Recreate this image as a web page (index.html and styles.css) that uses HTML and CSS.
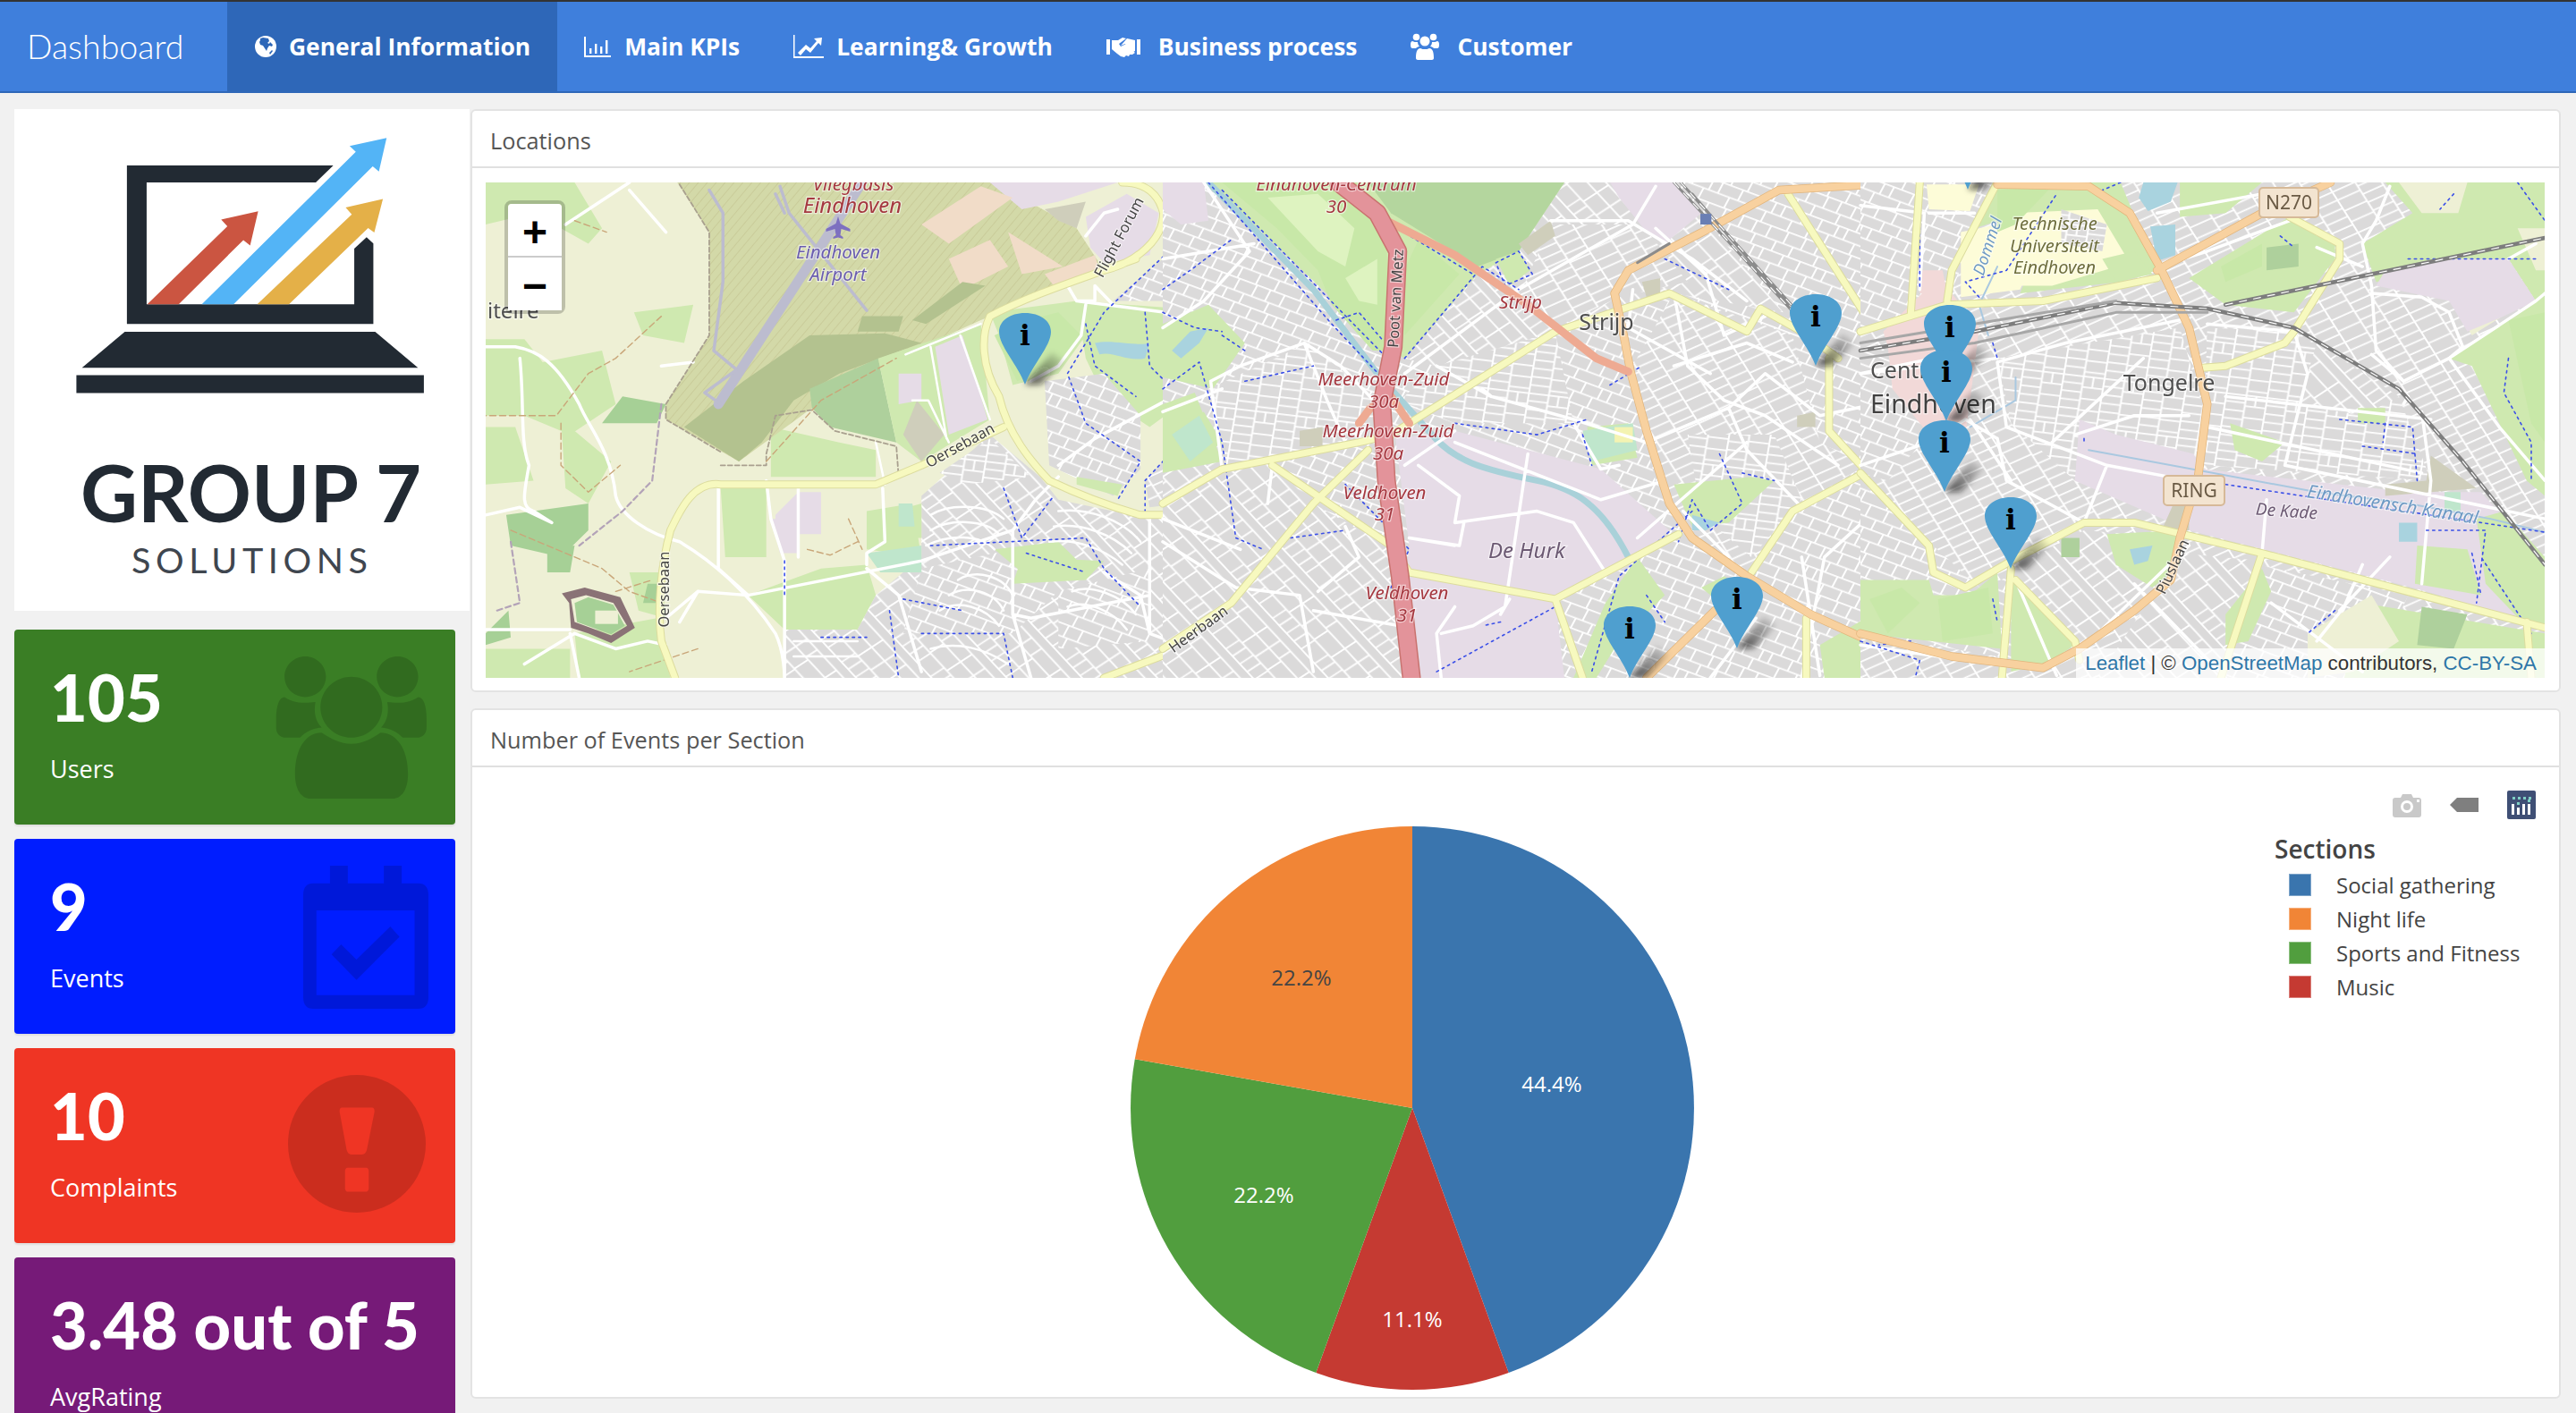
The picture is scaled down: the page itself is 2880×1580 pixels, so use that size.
FILE: index.html
```html
<!DOCTYPE html>
<html lang="en">
<head>
<meta charset="utf-8">
<title>Dashboard</title>
<link rel="stylesheet" href="styles.css">
</head>
<body>
<header class="navbar">
  <div class="brand">Dashboard</div>
  <nav class="tabs">
    <a class="tab active">
      <svg class="ic ic-globe" viewBox="0 0 24 24"><circle cx="12" cy="12" r="12" fill="#fff"/><path class="cut" d="M6 3l3-1 6 1 1 3-2 2 2 1 1-2 3 3-1 2-3-1-2 3-1 3-2-3-2-3-3-1-1-3 1-2zM16 19l3-3 1 1-3 4z"/></svg>
      General Information
    </a>
    <a class="tab">
      <svg class="ic ic-bar" viewBox="0 0 30 23"><path class="solid" d="M0 0h2v21h28v2H0z"/><path class="solid" d="M6 13h2.400v6H6zM12 8h2.400v11H12zM18 11h2.400v8H18zM24 4h2.400v15H24z"/></svg>
      Main KPIs
    </a>
    <a class="tab">
      <svg class="ic ic-line" viewBox="0 0 34 26"><path class="solid" d="M0 0h1.500v24H34v2H0z"/><path class="solid" d="M5 20l9-9 5 4 7-8-3-3 9-1-1 9-3-3-9 11-5-4-6 7z"/></svg>
      Learning&amp; Growth
    </a>
    <a class="tab">
      <svg class="ic ic-hand" viewBox="0 0 38 23"><path class="solid" d="M0 3h4v17H0zM34 3h4v17h-4z"/><path class="solid" d="M6 4l7 0 5-3 4 1-8 6 2 3 6-3 10 10-3 2-3 0-1 2-3-1-2 2-4-1-4-3-6-5z"/><path class="solid" d="M23 2l9 2v12l-2 1-9-9-5 2 7-8z"/></svg>
      Business process
    </a>
    <a class="tab">
      <svg class="ic ic-users" viewBox="0 0 32 30"><circle class="solid" cx="6.500" cy="4.500" r="3.800"/><circle class="solid" cx="25.500" cy="4.500" r="3.800"/><circle class="solid" cx="16" cy="9" r="5.500"/><path class="solid" d="M0 13c0-3 1-4 2-4 2 1 3 1 6 1 0 2 1 4 2 5-2 0-3 1-4 2H2c-1 0-2-1-2-4zM32 13c0-3-1-4-2-4-2 1-3 1-6 1 0 2-1 4-2 5 2 0 3 1 4 2h4c1 0 2-1 2-4zM8 30c-1 0-2-1-2-2 0-6 1-11 5-11 2 1 3 1 5 1s3 0 5-1c4 0 5 5 5 11 0 1-1 2-2 2z"/></svg>
      Customer
    </a>
  </nav>
</header>

<div class="page">
  <aside class="side">
    <div class="logo">
      <svg class="logo-svg" viewBox="0 0 509 561">
        <g transform="translate(-16 -122) translate(0 100) scale(.3444 .3827)">
          <path class="lg-dark" d="M412 222H1082L1025 272H476V628H1150V465L1190 432 1212 450V685H412Z"/>
          <path class="lg-dark" d="M405 708H1218L1357 813H266ZM248 835H1376V887H248Z"/>
          <path class="lg-red" d="M478 628 738 400 718 380 838 356 812 456 790 440 580 628Z"/>
          <path class="lg-blue" d="M655 628 1155 182 1135 165 1255 142 1230 240 1210 225 758 628Z"/>
          <path class="lg-gold" d="M835 628 1142 365 1122 345 1243 320 1215 418 1195 405 938 628Z"/>
        </g>
        <text class="lg-t1" x="74" y="462" textLength="381" lengthAdjust="spacingAndGlyphs">GROUP 7</text>
        <text class="lg-t2" x="131" y="519" textLength="264">SOLUTIONS</text>
      </svg>
    </div>

    <div class="vbox green">
      <div class="vnum">105</div><div class="vlab">Users</div>
      <svg class="vicon v-users" viewBox="893 78 497 280" preserveAspectRatio="none">
        <path d="M992 78c37 0 67 18 67 40s-30 40-67 40-67-18-67-40 30-40 67-40zM1290 78c37 0 67 18 67 40s-30 40-67 40-67-18-67-40 30-40 67-40zM1141 118c55 0 100 27 100 60s-45 60-100 60-100-27-100-60 45-60 100-60z"/>
        <path d="M925 158c20 8 45 14 100 10-6 20 0 38 20 50-30 2-50 8-70 20h-45c-20 0-32-8-32-20v-18c0-25 10-42 27-42zM1357 158c-20 8-45 14-100 10 6 20 0 38-20 50 30 2 50 8 70 20h45c20 0 32-8 32-20v-18c0-25-10-42-27-42z"/>
        <path d="M1045 228c30 12 60 22 96 22s66-10 94-22c50 0 89 30 89 82 0 30-20 48-50 48h-265c-30 0-50-18-50-48 0-52 36-82 86-82z"/>
      </svg>
    </div>
    <div class="vbox blue">
      <div class="vnum">9</div><div class="vlab">Events</div>
      <svg class="vicon v-cal" viewBox="985 490 407 282" preserveAspectRatio="none">
        <path fill-rule="evenodd" d="M1072 490h58v35h117v-35h58v35h55c20 0 32 8 32 22v203c0 14-12 22-32 22h-343c-20 0-32-8-32-22v-203c0-14 12-22 32-22h55zM1028 578v167h319v-167z"/>
        <path d="M1077 665l31-20 50 30 110-65 30 20-140 85z"/>
      </svg>
    </div>
    <div class="vbox red">
      <div class="vnum">10</div><div class="vlab">Complaints</div>
      <svg class="vicon v-exc" viewBox="935 906 447 270" preserveAspectRatio="none">
        <path fill-rule="evenodd" d="M1158 906c123 0 224 60 224 135s-101 135-224 135-223-60-223-135 100-135 223-135zM1110 970c-6 0-9 4-7 10l22 72c2 6 8 10 16 10h34c8 0 14-4 16-10l24-72c2-6-1-10-7-10zM1128 1088c-5 0-8 3-8 7v33c0 4 3 7 8 7h61c5 0 8-3 8-7v-33c0-4-3-7-8-7z"/>
      </svg>
    </div>
    <div class="vbox purple">
      <div class="vnum">3.48 out of 5</div><div class="vlab">AvgRating</div>
    </div>
  </aside>

  <main class="main">
    <section class="card card-map">
      <div class="card-head">Locations</div>
      <div class="card-body map-body">
        <div class="map">
          <svg class="map-svg" viewBox="543 204 2302 554" preserveAspectRatio="none">
            <defs>
              <pattern id="ra" width="150" height="120" patternUnits="userSpaceOnUse" patternTransform="rotate(24)"><rect width="150" height="120" fill="#dbdada"/><path class="st" d="M0 2H150M0 34H150M0 62H150M0 92H150M4 0V34M46 0V34M88 0V34M120 2V34M30 34V62M70 34V62M130 34V62M12 62V92M60 62V92M100 62V92M140 62V92M40 92V120M84 92V120M128 92V120"/></pattern>
              <pattern id="rb" width="130" height="150" patternUnits="userSpaceOnUse" patternTransform="rotate(-38)"><rect width="130" height="150" fill="#dbdada"/><path class="st" d="M2 0V150M40 0V150M78 0V76M110 0V150M0 20H40M0 44H40M0 70H40M0 96H40M0 122H40M40 30H110M40 76H110M78 112H110M78 76V150M40 120H78"/></pattern>
              <pattern id="rc" width="120" height="160" patternUnits="userSpaceOnUse" patternTransform="rotate(62)"><rect width="120" height="160" fill="#dbdada"/><path class="st" d="M0 2H120M0 54H120M0 106H120M6 2V54M30 2V54M54 2V54M78 2V54M102 2V54M18 54V106M42 54V106M66 54V106M90 54V106M114 54V106M6 106V160M38 106V160M70 106V160M102 106V160"/></pattern>
              <pattern id="rd" width="90" height="130" patternUnits="userSpaceOnUse" patternTransform="rotate(8)"><rect width="90" height="130" fill="#dbdada"/><path class="st" d="M2 0V130M46 0V130M0 2H90M2 22H46M2 44H46M2 66H46M2 88H46M2 110H46M46 30H90M46 60H90M46 90H90M46 120H90M68 0V30"/></pattern>
              <pattern id="air" width="16" height="16" patternUnits="userSpaceOnUse" patternTransform="rotate(35)"><rect width="16" height="16" fill="#d3d9a8"/><path d="M0 0V16" stroke="#c6c794" stroke-width="3"/></pattern>
              <linearGradient id="shadeg" x1="0" y1="1" x2="1" y2="0"><stop offset="0" stop-color="#111" stop-opacity=".75"/><stop offset="1" stop-color="#111" stop-opacity="0"/></linearGradient>
              <filter id="soft" x="-5%" y="-5%" width="110%" height="110%"><feGaussianBlur stdDeviation=".55"/></filter>
              <filter id="shade" x="-60%" y="-60%" width="220%" height="220%"><feGaussianBlur stdDeviation="3"/></filter>
            </defs>

            <g filter="url(#soft)">
            <rect class="l-cream" x="543" y="204" width="2302" height="554"/>

            <!-- west -->
            <g transform="translate(520 110) scale(.5102 .4274)">
              <path class="l-green" d="M45 220H240L300 340 270 380 150 300 45 330ZM45 630H130L170 690 300 660 330 800 230 880 130 830 45 830ZM45 860H110L150 1000 45 1010ZM210 840 320 950 270 1060 220 1020ZM370 560 500 540 480 640 390 620ZM560 1020H660V1200H570ZM670 860 820 900 900 920 900 990H670ZM360 1240 430 1240 440 1360 380 1340ZM240 1400 420 1360 450 1516H250ZM45 1440H230V1516H45ZM880 1080 980 1060 1000 1200 880 1180ZM780 1230 880 1220 900 1300 860 1390 700 1390 620 1300Z"/>
              <path class="l-forest" d="M90 1090 270 1060 270 1130 210 1200 100 1170ZM45 1400 95 1340 100 1410 45 1430ZM345 780 440 800 420 850 300 850ZM180 1180 240 1170 230 1240 180 1240ZM400 1270 430 1270 420 1320 390 1320Z"/>
              <path class="l-air" d="M465 220 535 350V620L440 800V840L600 950 760 810 945 680 1130 580 1400 450 1340 340 1160 220Z"/>
              <path class="l-wood" d="M755 620 920 615 1000 640 820 720 720 790 650 900 600 950 480 860 610 740Z" />
              <path class="l-forest2" d="M755 760 905 680 945 900 800 860 760 810Z"/>
              <path class="l-green" d="M905 680 1130 590 1150 840 1000 950 945 900Z"/>
              <path class="l-purple" d="M1030 650 1090 620 1145 840 1060 880ZM950 720 1000 720 1000 790 950 800ZM730 1030H780V1140H680V1090ZM670 1100H730V1190H690ZM1150 220H1430L1300 270 1220 290Z"/>
              <path class="l-pink" d="M1000 330 1130 230 1200 260 1060 380ZM1060 420 1150 370 1190 440 1090 500ZM1270 460 1380 410 1390 450 1290 490ZM1190 350 1310 440 1220 460Z"/>
              <path class="l-khaki" d="M990 790 1050 880 1000 950 960 880ZM1270 290 1360 270 1340 340 1300 320Z"/>
              <path class="l-wood" d="M980 580 1090 480 1140 490 1010 590ZM870 570 960 570 950 610 860 610Z"/>
              <path class="l-purple" d="M1360 310 1450 250 1520 300 1500 410 1400 430 1370 390Z"/>
              <path class="l-green" d="M1150 560 1340 530 1360 620 1300 720 1200 750 1170 620ZM1340 530 1568 550V800L1500 860 1400 780 1360 680Z"/>
              <path class="l-lawn" d="M1160 620 1230 580 1300 560 1350 620 1290 700 1210 740Z"/>
              <path fill="url(#ra)" d="M1420 530 1568 380V530ZM1270 740 1400 720 1480 830 1480 970 1420 1040 1280 960Z"/>
              <path fill="url(#rc)" d="M1568 900 1490 1000 1500 1070 1568 1060Z"/>
              <path fill="url(#rb)" d="M1000 1040 1150 880 1260 990 1300 1050 1500 1100 1568 1090V1516H700V1390H860L900 1300 1000 1200Z"/>
              <path fill="url(#rd)" d="M1040 980 1150 890 1240 990 1100 1010Z"/>
              <path fill="url(#ra)" d="M1000 1230 1200 1180 1300 1290 1200 1400 960 1400ZM1300 1290 1500 1230 1500 1420 1300 1440Z"/>
              <path class="l-green" d="M1160 1180 1300 1160 1360 1230 1230 1250ZM1220 1200 1400 1210 1360 1260 1200 1270ZM1340 990 1440 1010 1430 1040 1340 1010ZM940 1080 1000 1060 1000 1150 940 1150Z"/>
              <path class="l-teal" d="M880 1190 1000 1170 1000 1240 910 1240ZM950 1060 980 1060 985 1120 950 1120Z"/>
              <path class="l-water" d="M1380 640C1420 630 1470 650 1500 640L1490 680C1450 690 1420 660 1390 670Z"/>
              <path class="l-water" d="M1540 850 1568 820V900L1545 910Z"/>
              <g class="lines">
                <path class="runway" d="M870 220 555 800"/>
                <path class="taxi" d="M535 240 565 300 565 480 545 660 595 710 525 770 560 800M690 230 710 300 880 555M680 250 700 300"/>
                <path class="res-t" d="M1020 1090C1060 1060 1140 1060 1180 1100M1020 1130C1060 1100 1140 1100 1170 1140M1010 1170C1060 1140 1130 1140 1160 1180M1300 1080C1360 1070 1440 1100 1480 1160M1290 1120C1350 1110 1420 1140 1460 1190M1280 1160C1340 1150 1400 1180 1440 1220M1080 1260C1120 1230 1180 1250 1200 1300M1060 1300C1100 1270 1160 1290 1180 1340M1040 1340C1080 1310 1140 1330 1170 1380M1330 1290C1370 1270 1440 1300 1470 1350M1320 1330C1360 1310 1420 1340 1450 1390M720 1420H860M720 1460H860M1020 1440C1080 1420 1140 1440 1190 1480"/>
                <path class="res-l" d="M45 650H110C160 660 200 690 250 800 270 860 320 920 330 1040 340 1090 400 1140 470 1160 540 1210 620 1290 680 1400 700 1450 700 1516 700 1516M360 220 220 330M500 690 430 700M360 240 440 350M120 680C130 800 120 900 140 960 130 1030 120 1070 150 1080L190 1110 120 1070 45 1090M440 1360 510 1290 620 1300 1000 1210 1200 1130M510 1290 470 1370M230 1390 45 1390M230 1400 250 1516M130 1480 240 1400 330 1440 400 1420 440 1430M555 1020V1230L620 1300M660 1000 670 1100 700 1210 700 1516M730 1020V1200M915 1020 920 1160 880 1190 880 1220M880 1230 950 1300 1000 1500"/>
                <path class="farm" d="M965 670 1130 590M980 790 1015 790 1060 900M1020 650 1055 890M1085 620 1150 840M900 900 920 1010"/>
                <path class="res-l" d="M1340 530 1568 565M1320 490 1340 530 1380 530 1380 490 1420 540M1200 1130 1250 1050 1300 990M1200 1130 1200 1350 1240 1360 1500 1300M1200 1350 1240 1516M1500 1100V1400M1400 1240 1480 1300 1500 1400 1568 1430M1300 960 1380 890 1568 770M1360 540 1350 620 1300 700 1240 740M1360 360 1400 300 1430 290"/>
                <path class="wall" d="M470 225 535 350V620L440 800V840L560 925M560 960H660V930L680 830 760 815 810 870 945 910 950 990"/>
                <path class="dash-p" d="M430 800 410 1000 345 1080 250 1170M100 1160 120 1320 70 1340"/>
                <path class="dash-o" d="M240 320 310 350M430 570 330 680 270 720 200 830 45 830M210 850 210 960 270 1030 340 960M100 1130 300 1230 360 1290 430 1320M330 1290 410 1260M510 1440 360 1500M750 1180 800 1195 860 1160M840 1100 870 1180M660 950 780 790 945 680"/>
                <path class="foot" d="M1560 380 1400 560 1320 720 1360 850 1480 950 1430 1050M1490 560 1500 700 1568 780M1360 590 1380 700 1470 780M1568 900 1490 1000 1490 1090M1180 1020 1220 1150 1290 1040M1020 1170 1360 1150 1400 1230 1480 1330M930 1340 950 1516M700 1210 700 1300M780 1410H880M1000 1400 1180 1400 1200 1516M960 1310 1090 1340M1230 1190 1360 1240"/>
                <use href="#secW" class="case"/>
                <use href="#secW" class="sec"/>
              </g>
              <path class="moat" fill-rule="evenodd" d="M212 1295 262 1280 340 1305 372 1385 320 1425 270 1400 232 1385 228 1320ZM232 1310 240 1370 275 1385 320 1405 355 1380 325 1320 265 1300Z"/>
              <path class="l-forest" d="M240 1320 270 1305 325 1325 350 1380 320 1402 280 1385 245 1370Z"/>
              <path class="l-cream" d="M285 1340h50v35h-50z"/>
            </g>

            <!-- middle -->
            <g transform="translate(1300 110) scale(.5102 .4274)">
              <rect fill="url(#ra)" x="0" y="220" width="1540" height="1300"/>
              <path fill="url(#rb)" d="M0 900 240 960 330 1060 150 1320 0 1440ZM830 220H1120L1360 560 1120 510 860 610 720 760 600 700 530 680 700 450 780 400Z"/>
              <path fill="url(#rd)" d="M100 760 320 640 480 800 430 880 240 950 130 970ZM600 700 860 610 900 850 640 850 520 790Z"/>
              <path fill="url(#rc)" d="M1120 510 1380 620 1440 900 1540 960 1400 1060 1290 1240 1160 1150 1080 1000 1020 720Z"/>
              <path fill="url(#rb)" d="M330 1060 490 1170 550 1516H0V1440L150 1320Z"/>
              <path fill="url(#ra)" d="M870 1330 1130 1150 1200 1220 1040 1516H900Z"/>
              <path fill="url(#rc)" d="M850 330 1050 330 1150 480 1000 520 860 600 780 520Z"/>
              <path fill="url(#rd)" d="M1150 880 1340 880 1400 1050 1290 1200 1180 1090Z"/>
              <path class="l-purple" d="M0 220H90L100 320 40 330 0 290ZM980 220H1120L1180 300 1100 380 1060 350 1000 260Z"/>
              <path class="l-green" d="M100 220H880L780 400 690 460 530 680 470 640 350 500 200 330Z"/>
              <path class="l-lawn" d="M130 220H430L490 330 495 660 460 660 370 540 340 450 250 340ZM560 370 650 460 530 620 510 500Z"/>
              <path class="l-pale" d="M230 260 340 250 420 340 400 440 340 400ZM400 470 470 420 470 540 430 530Z"/>
              <path class="l-forest3" d="M450 220H880L780 400 690 440 500 300Z"/>
              <path class="l-green" d="M730 420 780 400 805 450 760 490ZM0 590 100 540 180 640 110 760 0 730ZM0 800 70 770 130 950 0 980ZM1120 1010 1290 990 1340 1000 1240 1110 1160 1120ZM970 1320 1040 1200 1100 1300 1000 1420 950 1516 900 1516ZM1180 1280 1230 1250 1300 1300 1260 1360ZM1440 1430 1540 1360V1516H1450ZM930 860 1020 850 1040 940 940 960Z"/>
              <path class="l-teal" d="M920 870 1030 850 1040 920 940 950Z"/>
              <path class="l-yellow" d="M990 860h40v40h-40z"/>
              <path class="l-khaki" d="M780 380 850 320 860 360 800 410ZM300 870 350 860 350 910 300 910ZM1050 480 1090 470 1090 510 1060 520ZM1390 830 1430 820 1430 860 1390 860Z"/>
              <path class="l-purple" d="M510 890 640 870 960 970 1110 1130 1010 1230 860 1310 535 1230 540 1170ZM540 1240 860 1310 880 1516H555Z"/>
              <path class="l-green" d="M10 860 90 820 130 900 60 960Z"/>
              <path class="l-teal" d="M20 880 80 830 110 900 60 950Z"/>
              <path class="l-water" d="M20 660 60 610 100 600 80 640 40 680ZM1160 1090 1220 1110 1190 1130 1160 1130Z"/>
              <g class="lines">
                <path class="canal" d="M100 220 330 500 470 720 590 880C640 950 700 970 820 1000 900 1020 960 1060 1020 1200"/>
                <path class="res-l" d="M0 600 90 530 190 400 90 220M105 740 170 700 310 640 390 700 470 800M105 740 130 970M0 820 130 760M240 960 230 1060M310 640 360 790 400 900M0 420 200 380M600 700 720 780 900 840 1060 900 1240 810 1320 720 1440 830 1560 800M720 780 700 760M1120 510 1150 700 1230 790 1320 830 1480 960M1120 700 1280 640 1380 690M900 850 960 970 1000 960M800 930 750 1330 680 1380 610 1400M640 870 530 960M640 900 960 1050 1100 1000M560 960 650 1040 640 1110 820 1080 900 1110 970 1240M540 1150 640 1170M660 1110 650 1170 540 1150M760 1310 740 1350M1240 810 1280 920 1400 1070M1200 720 1020 600 1030 500M1080 340 1190 460 1230 620 1320 570M640 1330 600 1400 610 1516M1040 1150 1280 900M1080 230 1030 330 780 500 530 720M850 320 1020 320 1160 420 1280 530M0 1100 170 1180M0 1160 160 1280 300 1300 330 1500M400 1120 430 1200 340 1290M330 1340 520 1380M1140 1080 1240 1200M1400 1200 1440 1510M1300 1360 1200 1516M1560 1080 1450 1200 1400 1516"/>
                <path class="foot" d="M100 220 370 590 480 730M130 240 500 690M370 230 500 330 680 460M0 500 60 450 150 370M0 560 70 600 130 610M0 760 80 690 130 900 160 1150 220 1180M180 740 330 700M130 620 180 660M380 580 430 560 480 630M640 850 820 880 930 840M920 880 940 960M400 1010 540 1180 500 1280M280 1150 400 1130M530 680 700 440 780 500M730 430 780 400 810 460 750 490 730 430M980 750 1050 700M1100 420 1240 500M1220 930 1270 1060 1200 1130 1160 1050 1130 1160M1160 1080 1000 1250 940 1500M1270 980 1340 1000M600 1500 860 1330M740 1370 700 1380M1060 1300 1100 1370"/>
                <use href="#secM" class="case"/>
                <use href="#secM" class="sec"/>
                <path class="tr-case" d="M1560 225 1350 240 1190 345 1020 450 990 510 1010 620 1025 715 1060 870 1110 1060 1160 1150 1280 1250 1420 1350 1568 1430M1060 1516 1210 1340"/>
                <path class="tr" d="M1560 225 1350 240 1190 345 1020 450 990 510 1010 620 1025 715 1060 870 1110 1060 1160 1150 1280 1250 1420 1350 1568 1430M1060 1516 1210 1340"/>
                <path class="pr" d="M490 320 640 410 800 540 950 680 1020 715M430 850 455 810 500 780 540 850"/>
                <path class="mw-case" d="M385 220 470 300 515 400 505 650 480 800 490 1000 520 1250 545 1516"/>
                <path class="mw" d="M385 220 470 300 515 400 505 650 480 800 490 1000 520 1250 545 1516"/>
                <path class="rail" d="M1120 220 1390 570M1135 220 1400 570M1160 250 1370 540"/>
                <path class="rail-d" d="M1120 220 1390 570M1135 220 1400 570"/>
                <path class="rail" d="M1040 430 1110 380"/>
              </g>
              <path class="station" d="M1178 302h24v28h-24z"/>
            </g>

            <!-- east -->
            <g transform="translate(2080 110) scale(.5102 .4274)">
              <rect fill="url(#rc)" x="0" y="220" width="1500" height="1300"/>
              <path fill="url(#ra)" d="M0 220H300L190 530 0 610ZM0 660H170L150 880 60 1000 0 980ZM0 1000 150 1160 260 1280 330 1250 400 1480 0 1400Z"/>
              <path fill="url(#rd)" d="M300 680 700 600 760 850 720 1000 470 1000 330 850ZM760 600 950 610 1180 780 1250 1000 750 960Z"/>
              <path fill="url(#rb)" d="M330 1230 490 1130 690 1150 660 1270 480 1450 400 1480ZM700 1190 880 1210 800 1516H520Z"/>
              <path fill="url(#ra)" d="M870 1220 1200 1300 1120 1516H800Z"/>
              <path fill="url(#rb)" d="M1000 640 1180 780 1100 830 960 800Z"/>
              <path class="l-pink2" d="M50 610 135 510 200 510 260 600 250 700 230 880 150 880 70 760 60 650ZM130 510 190 510 180 450 130 450Z"/>
              <path class="l-ivory" d="M145 225H260L240 295 150 290ZM220 350 340 320 400 360 350 500 220 520Z"/>
              <path class="l-green" d="M300 220H570L650 450 570 480 350 510 400 360 330 310 250 340Z"/>
              <path class="l-ivory" d="M330 300 520 290 590 430 420 490 340 490Z"/>
              <path fill="url(#rd)" d="M440 290 540 330 530 400 440 380Z"/>
              <path class="l-green" d="M530 420 600 400 640 460 560 480ZM700 220 880 220 800 300 700 310ZM720 470 940 310 1000 360 1040 380 1040 420 950 560 800 540ZM810 850 930 900 880 950 820 920ZM1090 810 1150 810 1150 850 1090 850Z"/>
              <path class="l-lawn" d="M790 440 880 380 880 440 800 480ZM300 240 420 230 340 330 300 350Z"/>
              <path class="l-forest2" d="M890 390 960 380 960 440 890 450Z"/>
              <path class="l-water" d="M620 220H695L680 270 630 295 610 260ZM635 335 690 330 690 410 650 425Z"/>
              <path class="l-green" d="M1150 220H1500V1040L1460 1000 1340 700 1290 680 1480 530 1420 420 1130 480 1100 380 1210 300Z"/>
              <path class="l-cream" d="M1180 220H1330L1310 300 1230 300ZM1300 540 1400 520 1420 560 1340 620ZM1440 340H1500V450H1480Z"/>
              <path class="l-lawn" d="M1420 580 1500 560V900L1470 850Z"/>
              <path class="l-purple" d="M1150 450 1290 420 1420 420 1480 530 1410 570 1330 610 1290 530 1130 490ZM480 840 560 880 730 930 750 970 1200 1030 1360 1030 1500 1220 1500 1380 1210 1280 720 1130 470 1000Z"/>
              <path class="l-khaki" d="M1250 935 1350 1020 1150 1040 1150 1010 1240 1000ZM690 1050 720 1050 720 1130 660 1130Z"/>
              <path class="l-teal" d="M1280 1030h35v50h-35z"/>
              <path class="l-green" d="M1220 1170 1330 1180 1360 1300 1215 1270ZM1350 1100 1410 1080 1500 1200 1500 1380 1450 1370 1370 1270Z"/>
              <path class="l-green" d="M0 1260 150 1260 160 1300 240 1300 300 1240 310 1440 0 1400ZM540 1140 700 1130 700 1220 640 1280 560 1220ZM330 1260 480 1420 410 1480 330 1500ZM1100 1320 1500 1400V1516H1060ZM800 1350 880 1230 900 1290 850 1420 800 1430Z"/>
              <path class="l-forest2" d="M1230 1330 1330 1350 1300 1440 1220 1430ZM440 1150 480 1150 480 1200 440 1200Z"/>
              <path class="l-lawn" d="M20 1310 90 1280 130 1320 60 1400ZM170 1310 280 1280 290 1400 180 1420Z"/>
              <path class="l-water" d="M590 1180 640 1170 630 1210 600 1220ZM1180 1110h40v50h-40z"/>
              <path class="l-cream" d="M980 1400 1120 1300 1180 1420 1080 1500 980 1516Z"/>
              <g class="lines">
                <path class="canal-thin" d="M240 860 340 790 340 730M500 920 1000 1030 1200 1060 1380 1100 1500 1135M300 440 260 540 280 620"/>
                <path class="res-l" d="M1160 230 1130 320 1100 380 1120 490 1130 660 1190 740 1290 680 1480 530 1500 510M1290 680 1400 860 1500 1000M1480 380 1420 420M1000 390 1100 440M1120 510 1230 520 1290 560 1320 650 1290 680M1120 670 1190 740M760 590 950 610 980 720 930 960M700 580 450 640 300 690 320 860 540 960 720 1000M620 680 420 900M720 830 600 830 470 880M800 780 1250 840M760 860 1230 980M930 960 1500 1100M1200 780 1190 800M1230 820 1250 1000 1230 1270M540 960 490 1110M890 1050 880 1190M300 890 320 1000 490 1110M0 720 200 670M0 960 150 900 230 840 300 890M240 840 330 1000M0 280 140 300 130 500M150 300 250 300M300 680 0 720M1100 1220 1060 1330 1000 1420M1050 1340 1160 1200M600 1270 800 1516M720 1170 520 1400M900 1320 1100 1500M0 1430 170 1460M340 1260 430 1510M650 300 880 250M680 430 760 400 940 320"/>
                <path class="foot" d="M130 240 130 500M260 520 230 480 320 450 430 250M570 220 530 240M1300 250 1270 290M1340 1190 1360 1300M1440 220 1500 320M920 360 950 390M1050 840 1210 860 1220 1000M1100 910 1220 930M1470 1400 1360 1200M1420 680 1410 770 1470 900 1470 1000M800 1010 1500 1135M1240 1130 1370 1130 1350 1320M490 890 490 900M1040 1340 980 1400M0 1420 130 1470 120 1516M110 1420 40 1430M290 1310 300 1370M290 640 300 680M1150 850 1145 900M1200 420 1480 420"/>
                <use href="#secE" class="case"/>
                <use href="#secE" class="sec"/>
                <path class="tr-case" d="M300 225 500 230 590 300 660 450 720 600 760 800 740 990 700 1150 680 1260 600 1340 480 1440 400 1490 200 1460 0 1400M650 450 880 300 1030 220"/>
                <path class="tr" d="M300 225 500 230 590 300 660 450 720 600 760 800 740 990 700 1150 680 1260 600 1340 480 1440 400 1490 200 1460 0 1400M650 450 880 300 1030 220"/>
                <path class="rail-wide" d="M0 660 250 610 560 535 760 550 950 600 1180 760 1320 950 1500 1220M800 540 1500 365"/>
                <path class="rail-wide2" d="M0 640 250 590 560 530M0 680 250 640 560 560 760 560"/>
                <path class="rail-d" d="M0 660 250 610 560 535 760 550 950 600 1180 760 1320 950 1500 1220M800 540 1500 365"/>
              </g>
            </g>

            <!-- labels -->
            <g class="lb-road-shield">
              <rect x="2526" y="210" width="66" height="33" rx="4"/>
              <rect x="2419" y="532" width="68" height="33" rx="4"/>
            </g>
            <text class="lb shield" x="2559" y="234">N270</text>
            <text class="lb shield" x="2453" y="556">RING</text>
            <text class="lb exit" x="954" y="213">Vliegbasis</text>
            <text class="lb exit big" x="953" y="238">Eindhoven</text>
            <path class="plane" d="M937 242l2.500 8 11 6v3l-10-3-1 7 3 2v2l-5.500-1.500L931.500 267v-2l3-2-1-7-10 3v-3l11-6z"/>
            <text class="lb air" x="937" y="289">Eindhoven</text>
            <text class="lb air" x="937" y="314">Airport</text>
            <text class="lb place small start" x="545" y="356">iteire</text>
            <text class="lb roadname" transform="translate(1076 503) rotate(-29)">Oersebaan</text>
            <text class="lb roadname" transform="translate(748 659) rotate(-90)">Oersebaan</text>
            <text class="lb roadname" transform="translate(1256 268) rotate(-62)">Flight Forum</text>
            <text class="lb exit" x="1494" y="213">Eindhoven-Centrum</text>
            <text class="lb exit" x="1494" y="238">30</text>
            <text class="lb roadname" transform="translate(1566 334) rotate(-87)">Poot van Metz</text>
            <text class="lb exit" x="1700" y="345">Strijp</text>
            <text class="lb place" x="1796" y="369">Strijp</text>
            <text class="lb exit" x="1547" y="431">Meerhoven-Zuid</text>
            <text class="lb exit" x="1547" y="456">30a</text>
            <text class="lb exit" x="1552" y="489">Meerhoven-Zuid</text>
            <text class="lb exit" x="1552" y="514">30a</text>
            <text class="lb exit" x="1548" y="558">Veldhoven</text>
            <text class="lb exit" x="1548" y="582">31</text>
            <text class="lb exit" x="1573" y="670">Veldhoven</text>
            <text class="lb exit" x="1573" y="695">31</text>
            <text class="lb hood" x="1707" y="624">De Hurk</text>
            <text class="lb roadname" transform="translate(1343 708) rotate(-36)">Heerbaan</text>
            <text class="lb uni" x="2297" y="257">Technische</text>
            <text class="lb uni" x="2297" y="282">Universiteit</text>
            <text class="lb uni" x="2297" y="306">Eindhoven</text>
            <text class="lb water-t" transform="translate(2228 277) rotate(-72)">Dommel</text>
            <text class="lb place start" x="2091" y="423">Centrum</text>
            <text class="lb city" x="2091" y="462">Eindhoven</text>
            <text class="lb place" x="2425" y="437">Tongelre</text>
            <text class="lb hood small" transform="translate(2556 578) rotate(4)">De Kade</text>
            <text class="lb water-t wide" transform="translate(2674 571) rotate(9)">Eindhovensch Kanaal</text>
            <text class="lb roadname" transform="translate(2434 636) rotate(-65)">Piuslaan</text>
            </g>

            <defs>
              <path id="secW" d="M1568 1090 1480 1090C1420 1070 1350 1040 1280 1000 1240 950 1190 880 1170 780 1130 700 1130 620 1150 570 1230 520 1330 480 1400 450 1470 430 1530 370 1530 300 1520 250 1490 220 1440 220M1400 450 1470 420M1180 860 1090 910 1000 960 900 1010H560C500 1000 470 1080 450 1130 430 1220 420 1330 430 1420L460 1516M1568 1440 1400 1516"/>
              <path id="secM" d="M0 1060 130 970 430 900 500 880 860 610 1110 510 1280 610 1310 550 1400 610 1480 680M240 960 500 1170 540 1240 860 1310 1130 1140M0 1440 150 1320 330 1060 450 920M860 1310 920 1516M1290 1240 1380 1080 1568 960M1370 250 1568 620M1460 680 1460 870 1568 1010M1410 1360 1410 1516"/>
              <path id="secE" d="M130 220 110 570M300 220 200 450 190 530M0 610 190 540 400 530 650 470M940 310 1050 380 1050 420 950 610 930 640 800 700 750 705M0 980 150 1170 160 1240 230 1280 330 1210 490 1110 600 1110 880 1190 1500 1385M330 1230 310 1516M340 1260 470 1420 480 1470M880 1190 790 1516M1460 1370 1470 1516"/>
              <g id="pin">
                <path class="pin-shade" d="M0 0 30 -36 44 -26 18 0Z" filter="url(#shade)"/>
                <path class="pin-body" d="M0 0C-8-22-29-43-29-59-29-71-17-80 0-80 17-80 29-71 29-59 29-43 8-22 0 0Z"/>
                <text class="pin-i" x="0" y="-44">i</text>
              </g>
            </defs>
            <use href="#pin" x="2200" y="212"/>
            <use href="#pin" x="1146" y="430"/>
            <use href="#pin" x="2030" y="409"/>
            <use href="#pin" x="2180" y="421"/>
            <use href="#pin" x="2176" y="471"/>
            <use href="#pin" x="2174" y="550"/>
            <use href="#pin" x="2248" y="636"/>
            <use href="#pin" x="1942" y="725"/>
            <use href="#pin" x="1822" y="758"/>
          </svg>
          <div class="zoom-ctl">
            <div class="zbtn zplus">+</div>
            <div class="zbtn">−</div>
          </div>
          <div class="attrib"><a class="link">Leaflet</a> | © <a class="link">OpenStreetMap</a> contributors, <a class="link">CC-BY-SA</a></div>
        </div>
      </div>
    </section>

    <section class="card card-pie">
      <div class="card-head">Number of Events per Section</div>
      <div class="card-body pie-body">
        <svg class="pie" viewBox="1264 924 630 630">
          <path class="s-blue" d="M1579 1239V924A315 315 0 0 1 1686.700 1535Z"/>
          <path class="s-red" d="M1579 1239 1686.700 1535A315 315 0 0 1 1471.300 1535Z"/>
          <path class="s-green" d="M1579 1239 1471.300 1535A315 315 0 0 1 1268.800 1184.300Z"/>
          <path class="s-orange" d="M1579 1239 1268.800 1184.300A315 315 0 0 1 1579 924Z"/>
          <text class="pct lt" x="1735" y="1221">44.4%</text>
          <text class="pct dk" x="1455" y="1102">22.2%</text>
          <text class="pct lt" x="1413" y="1345">22.2%</text>
          <text class="pct lt" x="1579" y="1484">11.1%</text>
        </svg>
        <div class="side-plot">
          <div class="modebar">
            <svg class="mb-cam" viewBox="0 0 32 26"><path fill-rule="evenodd" d="M3 4h6l2-4h10l2 4h6c2 0 3 1 3 3v16c0 2-1 3-3 3H3c-2 0-3-1-3-3V7c0-2 1-3 3-3zM16 7a7 7 0 1 0 0 14 7 7 0 0 0 0-14zM16 10a4 4 0 1 1 0 8 4 4 0 0 1 0-8zM27 6h3v3h-3z"/></svg>
            <svg class="mb-tag" viewBox="0 0 32 16"><path d="M8 0H32V16H8L0 8Z"/></svg>
            <svg class="mb-logo" viewBox="0 0 32 32"><rect width="32" height="32" rx="2" fill="#3f4f75"/><path class="mb-bars" d="M5 15h3v12H5zM11 19h3v8h-3zM17 15h3v12h-3zM23 15h3v12h-3z"/><path class="mb-dots" d="M6 7h3v3H6zM12 7h3v3h-3zM18 7h3v3h-3zM24 7h3v3h-3zM11 13h3v3h-3zM23 10h3v3h-3z"/></svg>
          </div>
          <div class="legend">
            <div class="legend-title">Sections</div>
            <div class="legend-row"><span class="sw sw-blue"></span>Social gathering</div>
            <div class="legend-row"><span class="sw sw-orange"></span>Night life</div>
            <div class="legend-row"><span class="sw sw-green"></span>Sports and Fitness</div>
            <div class="legend-row"><span class="sw sw-red"></span>Music</div>
          </div>
        </div>
      </div>
    </section>
  </main>
</div>
</body>
</html>
```

FILE: styles.css
```css
* { box-sizing: border-box; }
html, body { margin: 0; height: 100%; overflow: hidden; }
body { background: #f1f1f1; font-family: "Open Sans", "Lato", sans-serif; color: #444; }

/* top bar */
.navbar { display: flex; height: 104px; background: #3f7fdc; border-top: 2px solid #333; border-bottom: 2px solid #2e67b8; color: #fff; }
.brand { width: 254px; padding-left: 30px; font-family: "Lato", sans-serif; font-size: 37.500px; font-weight: 300; line-height: 100px; }
.tabs { display: flex; }
.tab { display: flex; align-items: center; height: 100px; padding: 0 30px; font-size: 26.400px; font-weight: 700; white-space: nowrap; }
.tab.active { background: #2e67b8; }
.ic { flex: none; }
.solid { fill: #fff; }
.cut { fill: #2e67b8; }
.ic-globe { width: 24px; height: 24px; margin: 0 14px 0 1px; }
.ic-bar { width: 30px; height: 23px; margin-right: 15px; }
.ic-line { width: 34px; height: 26px; margin-right: 14px; }
.ic-hand { width: 38px; height: 23px; margin-right: 20px; }
.ic-users { width: 32px; height: 30px; margin-right: 20px; }

/* layout */
.page { display: grid; grid-template-columns: 526px 2337px; padding-top: 18px; }
.side { padding-left: 16px; }
.main { display: flex; flex-direction: column; gap: 18px; }

/* logo */
.logo { width: 509px; height: 561px; background: #fff; margin-bottom: 21px; }
.logo-svg { display: block; width: 509px; height: 561px; }
.lg-dark { fill: #222a33; }
.lg-red { fill: #cb5541; }
.lg-blue { fill: #53b4f6; }
.lg-gold { fill: #e4b048; }
.lg-t1 { font: 700 88px "Lato", sans-serif; fill: #222a33; }
.lg-t2 { font: 400 39.500px "Lato", sans-serif; fill: #3f464f; }

/* value boxes */
.vbox { position: relative; width: 493px; height: 218px; margin-bottom: 16px; padding: 31px 0 0 40px; border-radius: 4px; color: #fff; box-shadow: 0 2px 2px rgba(0,0,0,.08); }
.green { background: #3a7e25; }
.blue { background: #001dff; }
.red { background: #ef3524; }
.purple { background: #761a78; }
.vnum { font-family: "Lato", sans-serif; font-size: 72px; font-weight: 900; line-height: 88px; letter-spacing: .2px; white-space: nowrap; }
.vlab { font-size: 27px; line-height: 40px; margin-top: 17px; }
.vicon { position: absolute; right: 30px; top: 30px; fill: rgba(0,0,0,.15); }
.v-users { width: 172px; height: 159px; }
.v-cal { width: 140px; height: 160px; }
.v-exc { width: 154px; height: 154px; right: 33px; }

/* cards */
.card { width: 2337px; background: #fff; border: 2px solid #e3e3e3; border-radius: 6px; }
.card-head { height: 64px; padding-left: 20px; border-bottom: 2px solid #e0e0e0; font-size: 25.300px; line-height: 66px; color: #555; }
.card-map { height: 652px; }
.card-pie { height: 772px; }
.map-body { padding: 16px 16px 0 15px; }
.pie-body { display: flex; }

/* map */
.map { position: relative; width: 2302px; height: 554px; overflow: hidden; background: #eef0d5; }
.map-svg { display: block; width: 2302px; height: 554px; }
.st { stroke: #fff; stroke-width: 4px; fill: none; }
.l-cream { fill: #eef0d5; }
.l-green { fill: #cfe9b0; }
.l-lawn { fill: #c8e8a8; }
.l-pale { fill: #def3c0; }
.l-forest { fill: #a6d096; }
.l-forest2 { fill: #aed09c; }
.l-forest3 { fill: #b4d69e; }
.l-air { fill: url(#air); }
.l-wood { fill: #b3c28f; }
.l-purple { fill: #e6dce7; }
.l-pink { fill: #f1dcc8; }
.l-pink2 { fill: #f2d9d8; }
.l-khaki { fill: #cfcebb; }
.l-teal { fill: #bfe6cc; }
.l-yellow { fill: #f4f3b2; }
.l-ivory { fill: #fdfcd8; }
.l-water { fill: #a9d3df; }
.lines path, .lines use { fill: none; vector-effect: non-scaling-stroke; stroke-linejoin: round; stroke-linecap: round; }
defs path { vector-effect: non-scaling-stroke; }
.runway { stroke: #bcbccf; stroke-width: 11px; stroke-linecap: butt; }
.taxi { stroke: #bcbccf; stroke-width: 3.5px; }
.res-l { stroke: #fff; stroke-width: 3.5px; }
.res-t { stroke: #fff; stroke-width: 2.5px; }
.farm { stroke: #fff; stroke-width: 2.5px; }
.wall { stroke: #a9a08f; stroke-width: 1.8px; stroke-dasharray: 5 3; }
.dash-p { stroke: #b3a3b8; stroke-width: 2.2px; stroke-dasharray: 6 4; }
.dash-o { stroke: #c9a679; stroke-width: 1.4px; stroke-dasharray: 7 4; }
.foot { stroke: #3a4fe8; stroke-width: 1.6px; stroke-dasharray: 2.5 4.5; }
.canal { stroke: #a9d1d9; stroke-width: 7px; }
.canal-thin { stroke: #a9c8e0; stroke-width: 2px; }
.case { stroke: #dcdc9e; stroke-width: 9px; fill: none; }
.sec { stroke: #f7f9bf; stroke-width: 7px; fill: none; }
.tr-case { stroke: #e2b57c; stroke-width: 9.5px; }
.tr { stroke: #f8d19f; stroke-width: 8px; }
.pr { stroke: #eeaa92; stroke-width: 9px; }
.mw-case { stroke: #c9736f; stroke-width: 21px; stroke-linecap: butt; }
.mw { stroke: #e3939a; stroke-width: 18px; stroke-linecap: butt; }
.rail { stroke: #8b8b8b; stroke-width: 3px; }
.rail-d { stroke: #fff; stroke-width: 1.2px; stroke-dasharray: 8 8; stroke-linecap: butt; }
.rail-wide { stroke: #7d7d7d; stroke-width: 4.5px; }
.rail-wide2 { stroke: #a7a7a7; stroke-width: 3px; }
.station { fill: #6a7fb4; }
.moat { fill: #8a7276; }
.lb-road-shield rect { fill: #f3e4d0; stroke: #d6b998; stroke-width: 2px; }
.plane { fill: #7d6fc0; }

/* map labels */
.lb { font-family: "Noto Sans", "Open Sans", sans-serif; text-anchor: middle; paint-order: stroke; stroke: rgba(255,255,255,.55); stroke-width: 2.5px; }
.start { text-anchor: start; }
.shield { font-size: 21px; fill: #6a5a44; stroke: none; }
.exit { font-size: 20.500px; font-style: italic; fill: #a5373f; }
.exit.big { font-size: 24px; }
.air { font-size: 20.500px; font-style: italic; fill: #6b5db0; }
.place { font-size: 25px; fill: #4f4f4f; }
.place.small { font-size: 24px; }
.city { font-size: 28.500px; fill: #3f3f3f; text-anchor: start; }
.roadname { font-size: 16.500px; fill: #444; }
.hood { font-size: 24px; font-style: italic; fill: #6c5a73; }
.hood.small { font-size: 19px; }
.uni { font-size: 20px; font-style: italic; fill: #6e6e3e; }
.water-t { font-size: 18px; font-style: italic; fill: #6e9ac4; }
.water-t.wide { font-size: 20.500px; }
.pin-body { fill: #4f9fcf; }
.pin-shade { fill: url(#shadeg); }
.pin-i { font: 700 31px "DejaVu Serif", serif; text-anchor: middle; fill: #000; }

.zoom-ctl { position: absolute; left: 21px; top: 20px; width: 68px; border: 4px solid rgba(0,0,0,.2); border-radius: 8px; background-clip: padding-box; }
.zbtn { height: 59px; background: #fff; color: #000; font: 700 48px/64px "Liberation Sans", sans-serif; text-align: center; }
.zplus { height: 60px; border-bottom: 2px solid #ccc; border-radius: 4px 4px 0 0; }
.attrib { position: absolute; right: 0; bottom: 0; height: 33px; width: 524px; padding: 0 9px 0 0; background: rgba(255,255,255,.75); font: 22.300px/34px "Liberation Sans", sans-serif; color: #333; white-space: nowrap; text-align: right; }
.link { color: #2e76a8; }

/* pie */
.pie { flex: none; width: 630px; height: 630px; margin: 66px 0 0 736px; }
.s-blue { fill: #3a75ae; }
.s-red { fill: #c53a32; }
.s-green { fill: #519e3e; }
.s-orange { fill: #f18536; }
.pct { font: 24px "Open Sans", sans-serif; text-anchor: middle; }
.lt { fill: #fff; }
.dk { fill: #444; }

.side-plot { margin-left: 649px; width: 320px; font-family: "Open Sans", sans-serif; font-size: 24px; }
.modebar { display: flex; align-items: center; height: 32px; margin: 26px 0 0 132px; gap: 32px; }
.mb-cam { width: 32px; height: 26px; margin-top: 1px; fill: #c9c9c9; }
.mb-tag { width: 32px; height: 16px; fill: #7f7f7f; }
.mb-logo { width: 32px; height: 32px; }
.mb-bars { fill: #fff; }
.mb-dots { fill: #7fd0c5; }
.legend { margin-top: 14px; }
.legend-title { font-size: 28px; font-weight: 600; line-height: 38px; margin-bottom: 2px; color: #444; }
.legend-row { display: flex; align-items: center; height: 38px; padding-left: 16px; color: #444; white-space: nowrap; }
.sw { width: 25px; height: 25px; margin-right: 28px; border: 1px solid rgba(255,255,255,.35); }
.sw-blue { background: #3a75ae; }
.sw-orange { background: #f18536; }
.sw-green { background: #519e3e; }
.sw-red { background: #c53a32; }
```
